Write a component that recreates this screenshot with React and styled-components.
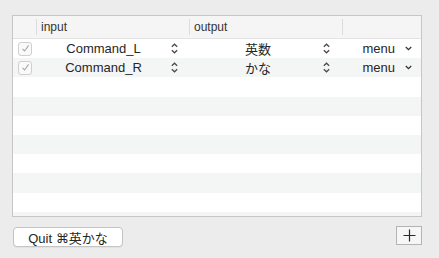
import styled, { createGlobalStyle } from "styled-components";

const GlobalStyle = createGlobalStyle`
  html, body {
    margin: 0;
    padding: 0;
    background: #ececec;
  }
  body {
    font-family: "Liberation Sans", "Noto Sans CJK JP", "DejaVu Sans", sans-serif;
    color: #262626;
  }
`;

const Window = styled.div`
  width: 439px;
  height: 258px;
  box-sizing: border-box;
  padding: 15px 17px 0 12px;
  display: flex;
  flex-direction: column;
`;

const Table = styled.div`
  height: 202px;
  box-sizing: border-box;
  border: 1px solid #c6c6c6;
  background: #fff;
  display: flex;
  flex-direction: column;
  overflow: hidden;
`;

const cols = "23px 153px 153px 1fr";

const Header = styled.div`
  display: grid;
  grid-template-columns: ${cols};
  height: 22px;
  flex: none;
  background: #f5f5f5;
  border-bottom: 1px solid #e2e2e2;
  font-size: 12px;
  color: #333;
`;

const HeaderCell = styled.div`
  display: flex;
  align-items: center;
  gap: 4px;
`;

const Sep = styled.div`
  width: 1px;
  height: 16px;
  background: #dcdcdc;
`;

const Rows = styled.div`
  flex: 1;
  overflow: hidden;
`;

const Row = styled.div`
  display: grid;
  grid-template-columns: ${cols};
  height: 19.2px;
  background: ${(p) => (p.$odd ? "#f4f5f5" : "#ffffff")};
  font-size: 13px;
  align-items: center;
`;

const CheckCell = styled.div`
  display: flex;
  justify-content: center;
  padding-left: 1px;
`;

const Box = styled.div`
  width: 12px;
  height: 12px;
  border: 1px solid #cfcfcf;
  border-radius: 3px;
  background: #fafafa;
  display: flex;
  align-items: center;
  justify-content: center;
`;

const Popup = styled.div`
  display: flex;
  align-items: center;
  padding-right: ${(p) => p.$pr}px;
`;

const PopupLabel = styled.div`
  flex: 1;
  text-align: center;
  padding-left: ${(p) => p.$pl || 0}px;
`;

const Menu = styled.div`
  display: flex;
  align-items: center;
  justify-content: flex-end;
  gap: 10px;
  padding-right: 9px;
`;

const Footer = styled.div`
  display: flex;
  justify-content: space-between;
  align-items: flex-start;
  margin-top: 9px;
`;

const QuitButton = styled.button`
  margin-left: 1px;
  margin-top: 1px;
  width: 110px;
  height: 20px;
  box-sizing: border-box;
  border: 1px solid #c4c4c4;
  border-radius: 4px;
  background: #fff;
  font-family: inherit;
  font-size: 13px;
  color: #262626;
  padding: 0;
  box-shadow: 0 0.5px 0 rgba(0, 0, 0, 0.08);
`;

const CmdGlyph = styled.span`
  font-family: "DejaVu Sans", sans-serif;
  font-size: 13px;
`;

const PlusButton = styled.button`
  width: 26px;
  height: 19px;
  box-sizing: border-box;
  border: 1px solid #b4b4b4;
  background: #f6f6f6;
  padding: 0;
  display: flex;
  align-items: center;
  justify-content: center;
`;

function Check() {
  return (
    <Box>
      <svg width="9" height="9" viewBox="0 0 9 9">
        <path d="M1.5 4.8 L3.6 7 L7.6 1.4" fill="none" stroke="#a8a8a8" strokeWidth="1.1" />
      </svg>
    </Box>
  );
}

function Stepper() {
  return (
    <svg width="7" height="11" viewBox="0 0 7 11">
      <path d="M0.8 3.8 L3.5 1.2 L6.2 3.8 M0.8 7.2 L3.5 9.8 L6.2 7.2" fill="none" stroke="#4a4a4a" strokeWidth="1.2" />
    </svg>
  );
}

function Chevron() {
  return (
    <svg width="7" height="5" viewBox="0 0 7 5">
      <path d="M0.8 1 L3.5 3.7 L6.2 1" fill="none" stroke="#333" strokeWidth="1.3" />
    </svg>
  );
}

const data = [
  { input: "Command_L", output: "英数" },
  { input: "Command_R", output: "かな" },
];

export default function App() {
  const rows = Array.from({ length: 10 }, (_, i) => data[i] || null);
  return (
    <Window>
      <GlobalStyle />
      <Table>
        <Header>
          <HeaderCell />
          <HeaderCell>
            <Sep />
            input
          </HeaderCell>
          <HeaderCell>
            <Sep />
            output
          </HeaderCell>
          <HeaderCell>
            <Sep />
          </HeaderCell>
        </Header>
        <Rows>
          {rows.map((r, i) => (
            <Row key={i} $odd={i % 2 === 1}>
              {r && (
                <>
                  <CheckCell>
                    <Check />
                  </CheckCell>
                  <Popup $pr={11}>
                    <PopupLabel>{r.input}</PopupLabel>
                    <Stepper />
                  </Popup>
                  <Popup $pr={12}>
                    <PopupLabel $pl={4}>{r.output}</PopupLabel>
                    <Stepper />
                  </Popup>
                  <Menu>
                    menu
                    <Chevron />
                  </Menu>
                </>
              )}
            </Row>
          ))}
        </Rows>
      </Table>
      <Footer>
        <QuitButton>
          Quit <CmdGlyph>⌘</CmdGlyph>英かな
        </QuitButton>
        <PlusButton>
          <svg width="13" height="13" viewBox="0 0 13 13">
            <path d="M6.5 0.5 V12.5 M0.5 6.5 H12.5" stroke="#2a2a2a" strokeWidth="1.2" />
          </svg>
        </PlusButton>
      </Footer>
    </Window>
  );
}
